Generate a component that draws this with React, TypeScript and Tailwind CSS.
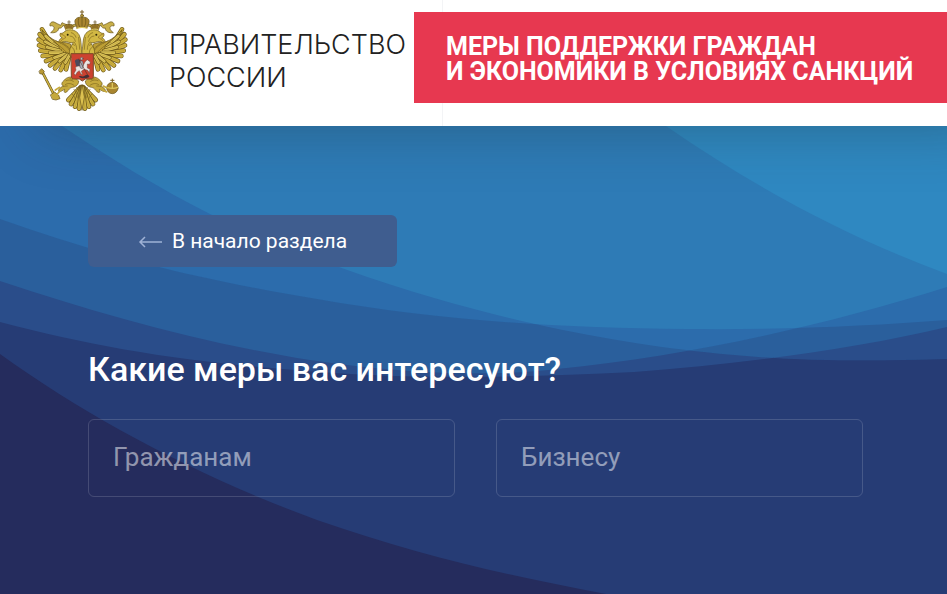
import { useState } from "react";

const WING_FEATHERS = [
  [66, 138, 36, 88],
  [62, 140, 29, 103],
  [64, 146, 26, 119],
  [68, 152, 27, 136],
  [72, 158, 31, 152],
  [78, 164, 38, 168],
  [86, 168, 48, 183],
  [94, 170, 60, 196],
  [102, 172, 75, 205],
  [110, 174, 92, 210],
  [116, 176, 108, 208],
];

const COVERT_FEATHERS = [
  [82, 140, 47, 108],
  [84, 146, 46, 125],
  [90, 152, 51, 142],
  [96, 158, 60, 158],
  [104, 162, 73, 173],
  [112, 164, 89, 184],
  [118, 166, 106, 188],
];

const TAIL_FEATHERS = [
  [152, 262, 115, 300],
  [152, 264, 123, 312],
  [154, 264, 135, 320],
  [155, 264, 147, 326],
];

function Feathers({ items, width, fill }: { items: number[][]; width: number; fill: string }) {
  return (
    <>
      {items.map(([x1, y1, x2, y2]) => (
        <g key={`${x2}-${y2}`} strokeLinecap="round">
          <line x1={x1} y1={y1} x2={x2} y2={y2} stroke="#6b5618" strokeWidth={width} />
          <line x1={x1} y1={y1} x2={x2} y2={y2} stroke={fill} strokeWidth={width - 4} />
          <line x1={x1} y1={y1} x2={x2} y2={y2} stroke="#a58a2c" strokeWidth={1} />
        </g>
      ))}
    </>
  );
}

function EagleHalf() {
  return (
    <g stroke="#655117" strokeWidth={2} strokeLinejoin="round" strokeLinecap="round">
      {/* ribbon */}
      <path
        d="M136 72C124 78 112 76 96 68L92 76C84 74 80 68 72 66C64 64 58 70 60 78C66 76 70 78 72 82C74 90 66 94 62 98C76 100 86 94 86 84C92 86 98 82 99 76C112 82 126 84 138 78Z"
        fill="#c9b04a"
      />
      <Feathers items={WING_FEATHERS} width={14} fill="#cdb03e" />
      <path d="M36 90C50 106 64 116 80 124C94 128 106 126 122 132L130 172L104 176C84 168 66 152 54 130C46 116 40 104 36 90Z" fill="#bd9f34" />
      <Feathers items={COVERT_FEATHERS} width={12} fill="#dcc458" />
      <path d="M78 122C94 132 108 134 118 150M70 126C90 138 100 146 112 160M96 128C106 134 114 140 122 148" fill="none" stroke="#7a6420" />
      {/* neck and head */}
      <path
        d="M154 170L120 168C114 150 124 138 130 128C124 128 116 128 110 125C102 123 96 126 90 129C85 123 88 116 97 114C91 111 88 106 91 100C99 102 101 95 110 91C124 86 140 92 147 104C155 118 152 138 156 152Z"
        fill="#d2b844"
      />
      <path d="M91 101C98 104 103 107 108 112C101 117 94 119 89 127" fill="none" stroke="#9b7425" strokeWidth={2.5} />
      <circle cx="113" cy="104" r="3" fill="#302706" stroke="none" />
      <path d="M124 98C132 100 136 106 138 112M120 108C130 108 134 116 136 124M132 126C138 132 140 140 140 148M124 140C130 144 134 150 134 158M146 112C148 124 147 136 149 148M126 132L134 136" fill="none" stroke="#7d661e" />
      {/* small crown */}
      <path d="M107 89L103 79C106 70 126 70 130 79L127 89C120 86 113 86 107 89Z" fill="#a9852f" />
      <path d="M117 62V72M113 66H121M111 77V86M117 74V86M123 77V86" fill="none" stroke="#5a4516" />
      <path d="M107 89C113 86 121 86 127 89" fill="none" stroke="#dcc65c" strokeWidth={3} />
      {/* leg */}
      <path d="M132 232C118 228 106 234 100 244C94 248 94 256 100 258C92 262 84 268 86 274C94 276 98 270 104 268C100 276 104 280 110 276C116 270 120 262 128 262C138 260 146 254 146 244Z" fill="#c5a93c" />
      <path d="M108 242C116 238 124 240 130 244M106 254C114 248 124 250 132 256M120 236L128 238M100 259L112 258" fill="none" stroke="#7d661e" />
      {/* tail */}
      <Feathers items={TAIL_FEATHERS} width={14} fill="#cdb342" />
      <path d="M132 268C138 276 142 284 142 294M140 262C146 270 150 280 150 292M126 282C132 286 136 292 136 300" fill="none" stroke="#7d661e" />
    </g>
  );
}

function CoatOfArms() {
  return (
    <svg viewBox="0 0 330 378" className="h-[126px] w-[110px] shrink-0" role="img" aria-label="Герб России">
      <EagleHalf />
      <g transform="translate(312 0) scale(-1 1)">
        <EagleHalf />
      </g>
      <g stroke="#655117" strokeWidth={2} strokeLinejoin="round" strokeLinecap="round">
        <path d="M156 254L149 292L156 331L163 292Z" fill="#dcc150" />
        {/* large crown */}
        <path d="M141 84L135 68C132 56 144 50 156 52C168 50 180 56 177 68L171 84C161 80 151 80 141 84Z" fill="#a9852f" />
        <path d="M156 53V80M146 56C143 66 145 74 149 80M166 56C169 66 167 74 163 80" fill="none" />
        <path d="M141 85C151 81 161 81 171 85" fill="none" stroke="#dcc65c" strokeWidth={3.5} />
        <circle cx="156" cy="47" r="4.5" fill="#b99a36" />
        <path d="M156 31V43M151 36H161" fill="none" stroke="#7a5f22" strokeWidth={3} />
        {/* scepter */}
        <path d="M37 216L72 284" fill="none" strokeWidth={8} />
        <path d="M37 216L72 284" fill="none" stroke="#cdb342" strokeWidth={4.5} />
        <path d="M28 213L35 206L43 214L38 223L30 221Z" fill="#b99a36" />
        <path d="M62 284L74 276L86 286L90 296L78 300L68 298Z" fill="#c5a93c" />
        <path d="M88 262L76 270M96 266L82 282" fill="none" stroke="#c5a93c" strokeWidth={5} />
        {/* orb */}
        <circle cx="247" cy="264" r="17" fill="#a9852f" />
        <path d="M231 262C242 266 253 266 263 262M247 248V264" fill="none" stroke="#dcc65c" strokeWidth={4} />
        <path d="M247 237V247M242 241H252" fill="none" stroke="#7a5f22" strokeWidth={3} />
        <path d="M220 258L231 264M214 268L230 276" fill="none" stroke="#c5a93c" strokeWidth={5} />
        {/* shield with the horseman */}
        <path d="M124 161H190V229C190 235 186 237 180 237H166L157 243L148 237H134C128 237 124 235 124 229Z" fill="#cc4230" stroke="#7a4a24" strokeWidth={3} />
      </g>
      <g strokeLinejoin="round" strokeLinecap="round">
        <path d="M136 188C132 180 138 176 146 178L154 182L158 192L150 204L138 198Z" fill="#4a4a5c" />
        <path
          d="M172 179L181 186L179 193L172 192L172 204L180 208L178 218L173 211L162 208L154 214L158 224L153 222L148 212L142 216L136 226L132 220L138 210L136 202L144 198L158 199L165 186Z"
          fill="#ebe6e2"
          stroke="#6b4a44"
          strokeWidth={1.5}
        />
        <path d="M151 182L158 184L160 196L157 206L151 204L149 192Z" fill="#aeb4bd" stroke="#4a4146" strokeWidth={1.5} />
        <circle cx="155" cy="176" r="4" fill="#c3c0bd" stroke="#4a4146" strokeWidth={1.5} />
        <path d="M146 177L174 227" stroke="#54342a" strokeWidth={2} />
        <path d="M146 230C152 224 158 234 166 226C172 222 178 226 178 231C168 236 156 236 146 230Z" fill="#453036" />
      </g>
    </svg>
  );
}

const CURVE_B = "M0 -40C30 -20 40 -14 62 0C110 32 160 63 210 88C300 130 390 161 474 183C560 206 640 219 704 226C790 236 870 235 947 233V468H0Z";
const CURVE_C = "M0 93C100 129 200 154 317 173C430 193 550 202 687 203C780 204 870 200 947 194V468H0Z";
const CURVE_D = "M0 155C90 185 190 214 297 232C410 250 500 250 557 243C690 230 830 198 947 161V468H0Z";
const CURVE_E = "M0 196C90 220 180 235 283 243C400 254 510 252 634 246C750 237 860 222 947 201V468H0Z";

function Waves() {
  return (
    <svg
      viewBox="0 0 947 468"
      preserveAspectRatio="xMidYMin slice"
      className="absolute inset-0 h-full w-full"
      aria-hidden="true"
    >
      <defs>
        <clipPath id="wave-b">
          <path d={CURVE_B} />
        </clipPath>
        <clipPath id="wave-c">
          <path d={CURVE_C} />
        </clipPath>
      </defs>
      <rect width="947" height="468" fill="#2e7bb6" />
      <path d="M666 0C760 65 850 112 947 148V0Z" fill="#2f88c1" />
      <g fill="#2c6cac">
        <path d={CURVE_B} />
        <path d={CURVE_C} />
        <path d={CURVE_D} />
      </g>
      <path d={CURVE_D} fill="#2a5f9c" clipPath="url(#wave-c)" />
      <path d={CURVE_E} fill="#2a4d8a" />
      <g clipPath="url(#wave-b)">
        <path d={CURVE_C} fill="#2a5f9c" />
        <path d={CURVE_D} fill="#2a4d8a" />
        <path d={CURVE_E} fill="#263c75" />
      </g>
      <path d="M0 228C90 293 200 351 317 394C420 430 510 450 606 468H0Z" fill="#252c5d" />
    </svg>
  );
}

const AUDIENCES = ["Гражданам", "Бизнесу"];

export default function App() {
  const [audience, setAudience] = useState<string | null>(null);

  return (
    <div className="flex min-h-screen flex-col bg-white font-['Roboto',sans-serif]">
      <header className="relative z-10 flex items-start bg-white shadow-[40px_0_60px_rgba(30,50,50,0.36)]">
        <a href="#" className="flex w-[414px] shrink-0 items-center pl-[30px]">
          <CoatOfArms />
          <span className="pb-1 pl-[29px] font-['Inter',sans-serif] text-[27px] leading-[33px] font-light text-[#222]">
            ПРАВИТЕЛЬСТВО
            <br />
            РОССИИ
          </span>
        </a>
        <div className="flex flex-1 flex-col self-stretch">
          <div className="ml-7 h-3 border-l border-gray-100" />
          <a
            href="#"
            className="flex flex-1 items-center bg-[#e73850] pt-0.5 pl-8 text-[25px] leading-[25px] font-bold whitespace-nowrap text-white"
          >
            <span>
              МЕРЫ ПОДДЕРЖКИ ГРАЖДАН
              <br />И ЭКОНОМИКИ В УСЛОВИЯХ САНКЦИЙ
            </span>
          </a>
          <div className="ml-7 h-[23px] border-l border-gray-100" />
        </div>
      </header>

      <main className="relative flex-1 overflow-hidden bg-[#263c75]">
        <Waves />
        <div className="relative pt-[89px] pr-[84px] pb-24 pl-[88px] text-white">
          <button
            type="button"
            className="flex h-[52px] w-[309px] items-center justify-center gap-[10px] rounded-md bg-[#3f5d8f] pt-0.5 text-[21px]"
          >
            <svg className="h-3 w-6" viewBox="0 0 24 12" fill="none" stroke="#9fb2d6" strokeWidth="1.5" aria-hidden="true">
              <path d="M24 6H2M7 1L2 6L7 11" />
            </svg>
            В начало раздела
          </button>

          <h1 className="mt-[82px] text-[34px] leading-10 font-medium">Какие меры вас интересуют?</h1>

          <div className="mt-[30px] grid grid-cols-2 gap-[41px]">
            {AUDIENCES.map((name) => (
              <button
                key={name}
                type="button"
                aria-pressed={audience === name}
                onClick={() => setAudience(name)}
                className="h-[78px] rounded-md border border-white/15 px-6 pb-0.5 text-left text-[26px] text-white/50 aria-pressed:border-white aria-pressed:text-white"
              >
                {name}
              </button>
            ))}
          </div>
        </div>
      </main>
    </div>
  );
}
